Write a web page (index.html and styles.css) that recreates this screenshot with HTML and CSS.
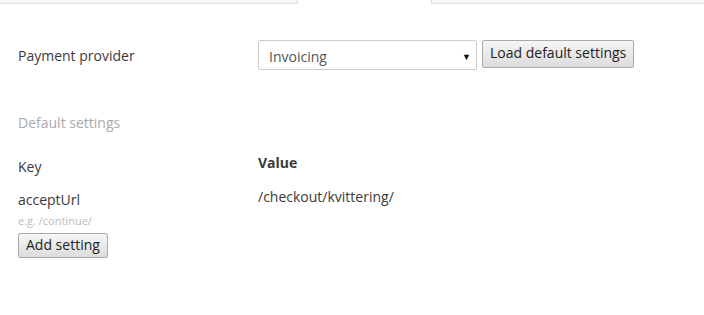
FILE: index.html
```html
<!DOCTYPE html>
<html lang="en">
<head>
    <meta charset="UTF-8">
    <title>Payment settings</title>
    <link rel="stylesheet" href="styles.css">
</head>
<body>
    <div class="tabs">
        <div class="tab"></div>
        <div class="tab active"></div>
        <div class="tab"></div>
    </div>

    <div class="panel">
        <div class="row provider-row">
            <label class="label">Payment provider</label>
            <div class="controls">
                <div class="select">
                    <span>Invoicing</span>
                    <span class="caret">&#9660;</span>
                </div>
                <button class="btn">Load default settings</button>
            </div>
        </div>

        <h4 class="section-title">Default settings</h4>

        <div class="row head-row">
            <div class="label">Key</div>
            <div class="value-head">Value</div>
        </div>

        <div class="row setting-row">
            <div class="label">acceptUrl</div>
            <div class="value">/checkout/kvittering/</div>
        </div>
        <div class="hint">e.g. /continue/</div>
        <button class="btn add-btn">Add setting</button>
    </div>
</body>
</html>
```

FILE: styles.css
```css
body {
    font-family: 'Open Sans', 'Liberation Sans', sans-serif;
    margin: 0;
    background: #fff;
    color: #3a3a3a;
    font-size: 14px;
}

.tabs {
    display: flex;
    height: 4px;
}

.tab {
    background: #f7f7f7;
    border: 1px solid #ddd;
    border-top: none;
    box-sizing: border-box;
}

.tab:first-child {
    width: 298px;
    border-left: none;
}

.tab.active {
    width: 133px;
    background: #fff;
    border: none;
}

.tab:last-child {
    flex: 1;
    border-right: none;
}

.panel {
    padding: 36px 18px 0;
}

.row {
    display: flex;
}

.label {
    width: 240px;
    flex: none;
}

.provider-row .label {
    padding-top: 6px;
}

.controls {
    display: flex;
    align-items: flex-start;
    gap: 5px;
}

.select {
    width: 219px;
    height: 30px;
    box-sizing: border-box;
    border: 1px solid #ccc;
    border-radius: 2px;
    padding: 6px 0 0 10px;
    display: flex;
    justify-content: space-between;
    color: #555;
}

.caret {
    font-size: 9px;
    color: #111;
    padding: 3px 5px 0 0;
}

.btn {
    font-family: 'Open Sans', 'Liberation Sans', sans-serif;
    font-size: 14px;
    color: #222;
    background: linear-gradient(#f6f6f6, #dcdcdc);
    border: 1px solid #aaa;
    border-radius: 2px;
    padding: 2px 7px 4px;
    line-height: 20px;
}

.section-title {
    margin: 43px 0 0;
    font-weight: normal;
    font-size: 14px;
    color: #aaa;
}

.head-row {
    margin-top: 21px;
}

.head-row .label {
    padding-top: 4px;
}

.value-head {
    font-weight: bold;
}

.setting-row {
    margin-top: 11px;
}

.setting-row .label {
    padding-top: 3px;
}

.hint {
    font-size: 11px;
    color: #bbb;
    margin-top: 4px;
}

.add-btn {
    margin-top: 5px;
    padding: 1px 7px 2px;
}
```
